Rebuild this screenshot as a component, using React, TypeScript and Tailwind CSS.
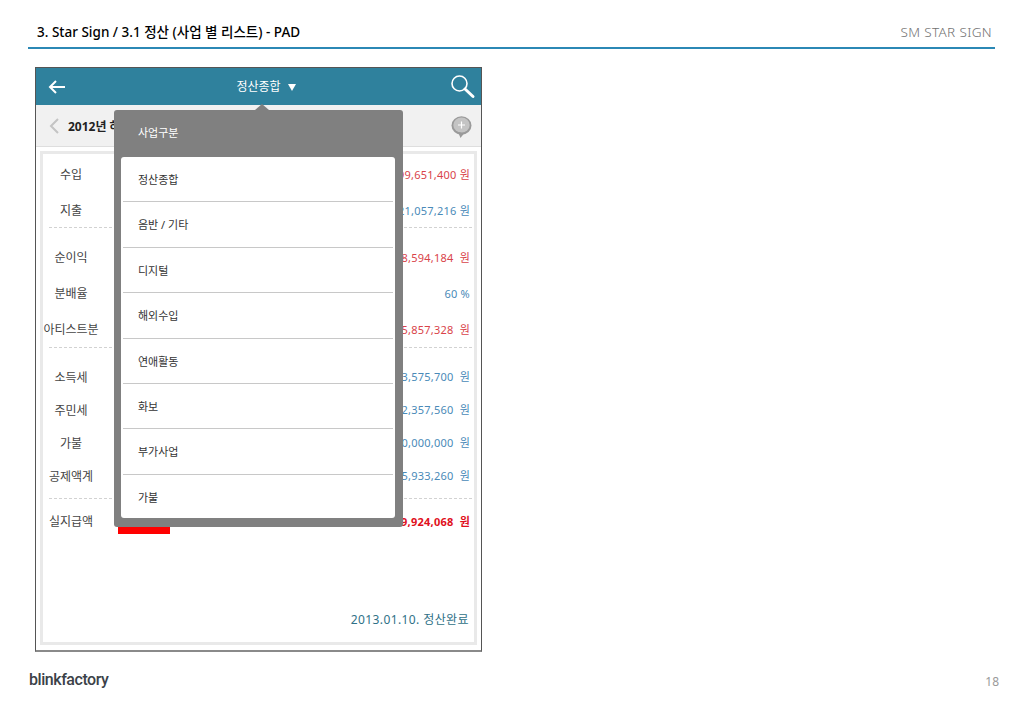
import { Fragment } from "react";

const font = { fontFamily: '"Noto Sans", "Noto Sans CJK KR", sans-serif' };

const red = "text-[#d9434a]";
const blue = "text-[#4a8ab8]";

const rows = [
  { label: "수입", value: "99,651,400", unit: "원", color: red, height: "h-9", near: true },
  { label: "지출", value: "21,057,216", unit: "원", color: blue, height: "h-9", near: true, divider: "mb-[10px]" },
  { label: "순이익", value: "8,594,184", unit: "원", color: red, height: "h-9" },
  { label: "분배율", value: "60", unit: "%", color: blue, height: "h-9", near: true },
  { label: "아티스트분", value: "5,857,328", unit: "원", color: red, height: "h-9", divider: "mt-[1px] mb-[11px]" },
  { label: "소득세", value: "3,575,700", unit: "원", color: blue, height: "h-[33px]" },
  { label: "주민세", value: "2,357,560", unit: "원", color: blue, height: "h-[33px]" },
  { label: "가불", value: "0,000,000", unit: "원", color: blue, height: "h-[33px]" },
  { label: "공제액계", value: "5,933,260", unit: "원", color: blue, height: "h-[33px]", divider: "mt-[7px]" },
];

const menuItems = ["정산종합", "음반 / 기타", "디지털", "해외수입", "연애활동", "화보", "부가사업", "가불"];

function Row({
  label,
  value,
  unit,
  color,
  height,
  near,
  bold,
}: {
  label: string;
  value: string;
  unit: string;
  color: string;
  height: string;
  near?: boolean;
  bold?: boolean;
}) {
  return (
    <div className={`flex items-center justify-between pr-[2px] pt-[4px] ${height}`}>
      <span className="w-[56px] whitespace-nowrap text-center text-[12px] text-[#444]">{label}</span>
      <span className={`flex whitespace-nowrap text-[11px] tracking-[0.25px] ${color} ${bold ? "font-bold" : ""}`}>
        {value}
        <span className={near ? "ml-[3px]" : "ml-[6px]"}>{unit}</span>
      </span>
    </div>
  );
}

function SearchIcon() {
  return (
    <svg width="26" height="26" viewBox="0 0 26 26" fill="none">
      <circle cx="9.5" cy="9.5" r="7.5" stroke="white" strokeWidth="1.6" />
      <path d="M15 15L23 22.5" stroke="white" strokeWidth="3" strokeLinecap="round" />
    </svg>
  );
}

function BubbleIcon() {
  return (
    <svg width="21" height="23" viewBox="0 0 21 23">
      <ellipse cx="10.5" cy="9.5" rx="10" ry="9.2" fill="#9a9a9a" />
      <ellipse cx="10.5" cy="9" rx="8.2" ry="7.5" fill="#c4c4c4" />
      <path d="M7 16L9.5 22L13 17.5Z" fill="#9a9a9a" />
      <path d="M10.5 5.5V12.5M7 9H14" stroke="white" strokeWidth="1.2" />
    </svg>
  );
}

export default function App() {
  return (
    <div className="flex h-[708px] w-[1023px] flex-col overflow-hidden bg-white" style={font}>
      <header className="mx-[28px] flex h-[49px] items-end justify-between border-b-2 border-[#2b88b5] pb-[6px] pl-[9px]">
        <h1 className="text-[13.5px] font-medium leading-[18px] text-black">3. Star Sign / 3.1 정산 (사업 별 리스트) - PAD</h1>
        <span className="pr-[3px] text-[13.5px] font-light leading-[18px] tracking-[0.35px] text-[#707070]">SM STAR SIGN</span>
      </header>

      <main className="relative ml-[35px] mt-[18px] flex h-[585px] w-[447px] flex-col border border-[#555] border-b-2 border-b-[#8a8a8a]">
        <div className="flex h-[37px] shrink-0 items-center justify-between bg-[#2f819d] pl-[12px] pr-[5px]">
          <svg width="18" height="14" viewBox="0 0 18 14" fill="none">
            <path d="M8 1L2 7L8 13M2 7H17" stroke="white" strokeWidth="2" />
          </svg>
          <div className="flex items-center gap-[7px] pl-[16px] text-[12px] text-white">
            정산종합
            <svg className="mt-[2px]" width="8" height="7" viewBox="0 0 8 7">
              <path d="M0 0H8L4 7Z" fill="white" />
            </svg>
          </div>
          <SearchIcon />
        </div>

        <div className="flex h-[42px] shrink-0 items-center justify-between border-b border-[#dedede] bg-[#f1f1f1] pl-[13px] pr-[9px]">
          <div className="flex items-center gap-[9px] pt-[1px]">
            <svg width="10" height="16" viewBox="0 0 10 16" fill="none">
              <path d="M9 1L2 8L9 15" stroke="#c4c4c4" strokeWidth="2" />
            </svg>
            <span className="whitespace-nowrap pt-[1px] text-[12px] font-bold text-[#222]">2012년 하</span>
          </div>
          <div className="pt-[3px]">
            <BubbleIcon />
          </div>
        </div>

        <div className="mx-[4px] mb-[5px] mt-[4px] flex flex-1 flex-col border-[3px] border-[#e9e9e9] bg-white pb-[13px] pr-[2px]">
          <div className="pt-[1px]">
            {rows.map((row) => (
              <Fragment key={row.label}>
                <Row
                  label={row.label}
                  value={row.value}
                  unit={row.unit}
                  color={row.color}
                  height={row.height}
                  near={row.near}
                />
                {row.divider && <div className={`ml-[6px] border-t border-dashed border-[#d2d2d2] ${row.divider}`} />}
              </Fragment>
            ))}
            <div className="mt-[10px]">
              <Row label="실지급액" value="9,924,068" unit="원" color="text-[#e0101c]" height="h-[22px]" bold />
            </div>
            <div className="ml-[75px] mt-[-5px] h-[8px] w-[52px] bg-[#ff0000]" />
          </div>
          <div className="mt-auto pr-[3px] text-right text-[12px] tracking-[0.4px] text-[#2f7187]">2013.01.10. 정산완료</div>
        </div>

        {/* popup over the list */}
        <div className="absolute left-[78px] top-[42px] w-[289px] rounded-[3px] bg-[#808080] pb-[9px] pl-[7px] pr-[8px]">
          <div className="absolute left-[141px] top-[-6px] h-0 w-0 border-x-[7px] border-b-[6px] border-x-transparent border-b-[#808080]" />
          <div className="flex h-[47px] items-center pl-[17px] text-[11px] text-white">사업구분</div>
          <ul className="h-[361px] rounded-[3px] bg-white px-[2px]">
            {menuItems.map((item, i) => (
              <li
                key={item}
                className={`flex h-[45.4px] items-center pl-[15px] pt-[2px] text-[11px] text-[#333] ${i < menuItems.length - 1 ? "border-b border-[#c8c8c8]" : ""}`}
              >
                {item}
              </li>
            ))}
          </ul>
        </div>
      </main>

      <footer className="ml-[29px] mr-[24px] mt-[17px] flex items-center justify-between">
        <span className="font-['Roboto',sans-serif] text-[16px] font-medium leading-[22px] tracking-[-0.45px] text-[#3b4248]">blinkfactory</span>
        <span className="pt-[3px] text-[12px] text-[#9a9a9a]">18</span>
      </footer>
    </div>
  );
}
